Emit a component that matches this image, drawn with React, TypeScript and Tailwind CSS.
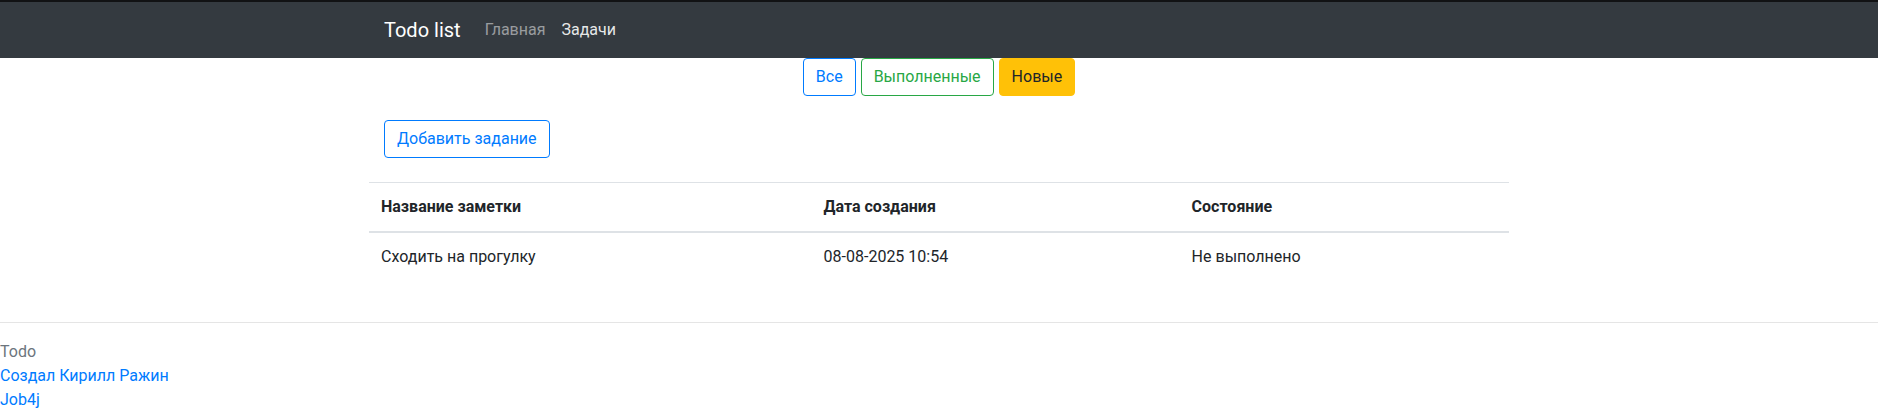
import React from 'react';

const tasks = [
  { title: 'Сходить на прогулку', created: '08-08-2025 10:54', done: false },
];

export default function App() {
  return (
    <div className="min-h-[411px] bg-white text-[16px] leading-6 text-[#212529] font-['Segoe_UI',Roboto,'Noto_Sans',sans-serif]">
      <nav className="h-[58px] border-t-2 border-[#111214] bg-[#343a40]">
        <div className="mx-auto flex h-full max-w-[1140px] items-center px-[15px]">
          <a href="#" className="mr-4 text-[20px] leading-[30px] text-white">Todo list</a>
          <a href="#" className="px-2 text-[rgba(255,255,255,0.5)]">Главная</a>
          <a href="#" className="px-2 text-[rgba(255,255,255,0.9)]">Задачи</a>
        </div>
      </nav>

      <div className="mx-auto max-w-[1140px]">
        <div className="flex justify-center gap-[5px]">
          <button className="rounded border border-[#007bff] px-3 py-[6px] text-[#007bff]">Все</button>
          <button className="rounded border border-[#28a745] px-3 py-[6px] text-[#28a745]">Выполненные</button>
          <button className="rounded border border-[#ffc107] bg-[#ffc107] px-3 py-[6px] text-[#212529]">Новые</button>
        </div>

        <div className="mt-6 mb-6 px-[15px]">
          <button className="rounded border border-[#007bff] px-3 py-[6px] text-[#007bff]">Добавить задание</button>
        </div>

        <table className="w-full border-collapse text-left">
          <thead>
            <tr>
              <th className="border-t border-b-2 border-[#dee2e6] p-3 font-bold">Название заметки</th>
              <th className="border-t border-b-2 border-[#dee2e6] p-3 font-bold">Дата создания</th>
              <th className="border-t border-b-2 border-[#dee2e6] p-3 font-bold">Состояние</th>
            </tr>
          </thead>
          <tbody>
            {tasks.map((t) => (
              <tr key={t.title}>
                <td className="p-3">{t.title}</td>
                <td className="p-3">{t.created}</td>
                <td className="p-3">{t.done ? 'Выполнено' : 'Не выполнено'}</td>
              </tr>
            ))}
          </tbody>
        </table>
      </div>

      <footer className="mt-[41px] border-t border-[rgba(0,0,0,0.1)] pt-[17px]">
        <div className="text-[#6c757d]">Todo</div>
        <a href="#" className="block text-[#007bff]">Создал Кирилл Ражин</a>
        <a href="#" className="block text-[#007bff]">Job4j</a>
      </footer>
    </div>
  );
}
